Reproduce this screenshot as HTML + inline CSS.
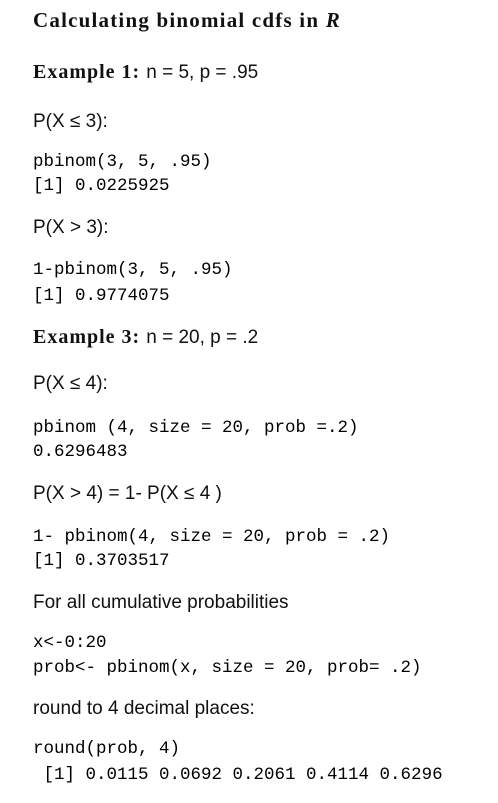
<!DOCTYPE html>
<html><head><style>
body{margin:0;width:498px;height:803px;background:#fff;position:relative;color:#111;overflow:hidden}
div{position:absolute;left:33px;white-space:pre;line-height:20px;height:20px}
.t{font-family:"Liberation Serif",serif;font-weight:bold;font-size:21px;letter-spacing:1.2px}
.s{font-family:"Liberation Sans",sans-serif;font-size:19px}
.m{font-family:"Liberation Mono",monospace;font-size:17.5px;color:#000}
.b{font-family:"Liberation Serif",serif;font-weight:bold;font-size:20px;letter-spacing:1px}
</style></head><body>
<div class="t" style="top:10px">Calculating binomial cdfs in <i>R</i></div>
<div style="top:62px"><span class="b">Example 1: </span><span class="s">n = 5, p = .95</span></div>
<div class="s" style="top:112px">P(X ≤ 3):</div>
<div class="m" style="top:152px">pbinom(3, 5, .95)</div>
<div class="m" style="top:176px">[1] 0.0225925</div>
<div class="s" style="top:218px">P(X &gt; 3):</div>
<div class="m" style="top:260px">1-pbinom(3, 5, .95)</div>
<div class="m" style="top:286px">[1] 0.9774075</div>
<div style="top:327px"><span class="b">Example 3: </span><span class="s">n = 20, p = .2</span></div>
<div class="s" style="top:374px">P(X ≤ 4):</div>
<div class="m" style="top:418px">pbinom (4, size = 20, prob =.2)</div>
<div class="m" style="top:442px">0.6296483</div>
<div class="s" style="top:484px">P(X &gt; 4) = 1- P(X ≤ 4 )</div>
<div class="m" style="top:527px">1- pbinom(4, size = 20, prob = .2)</div>
<div class="m" style="top:551px">[1] 0.3703517</div>
<div class="s" style="top:593px">For all cumulative probabilities</div>
<div class="m" style="top:633px">x&lt;-0:20</div>
<div class="m" style="top:658px">prob&lt;- pbinom(x, size = 20, prob= .2)</div>
<div class="s" style="top:699px">round to 4 decimal places:</div>
<div class="m" style="top:739px">round(prob, 4)</div>
<div class="m" style="top:765px"> [1] 0.0115 0.0692 0.2061 0.4114 0.6296</div>
</body></html>
